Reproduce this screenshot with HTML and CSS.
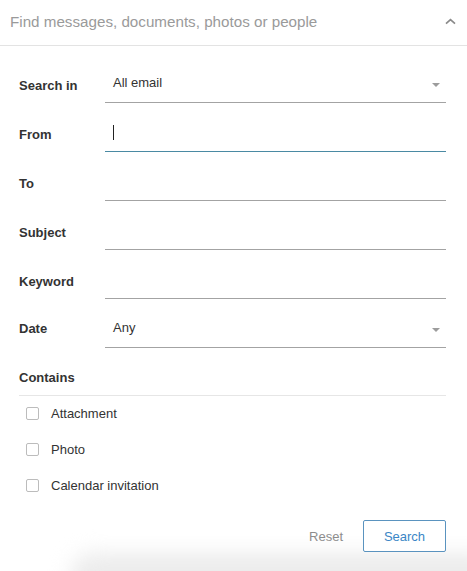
FILE: index.html
```html
<!DOCTYPE html>
<html>
<head>
<meta charset="utf-8">
<link rel="stylesheet" href="styles.css">
</head>
<body>
<div class="panel">
  <div class="shadow"></div>
  <div class="header">
    <span class="placeholder">Find messages, documents, photos or people</span>
    <svg class="chev" width="11" height="7" viewBox="0 0 11 7"><path d="M1 5.6 L5.5 1.6 L10 5.6" fill="none" stroke="#8a8a8a" stroke-width="1.7"/></svg>
  </div>
  <div class="form">
    <div class="row">
      <div class="label">Search in</div>
      <div class="field select"><span class="value">All email</span><span class="caret"></span></div>
    </div>
    <div class="row">
      <div class="label">From</div>
      <div class="field focus"><span class="cursor"></span></div>
    </div>
    <div class="row">
      <div class="label">To</div>
      <div class="field"></div>
    </div>
    <div class="row">
      <div class="label">Subject</div>
      <div class="field"></div>
    </div>
    <div class="row">
      <div class="label">Keyword</div>
      <div class="field"></div>
    </div>
    <div class="row date">
      <div class="label">Date</div>
      <div class="field select"><span class="value">Any</span><span class="caret"></span></div>
    </div>
    <div class="contains">Contains</div>
    <div class="checks">
      <div class="check"><span class="box"></span><span>Attachment</span></div>
      <div class="check"><span class="box"></span><span>Photo</span></div>
      <div class="check"><span class="box"></span><span>Calendar invitation</span></div>
    </div>
    <div class="actions">
      <span class="reset">Reset</span>
      <span class="search">Search</span>
    </div>
  </div>
</div>
</body>
</html>
```

FILE: styles.css
```css
html, body {
  margin: 0;
  padding: 0;
  background: #fff;
}
body {
  font-family: "Liberation Sans", Arial, Helvetica, sans-serif;
  color: #333;
  width: 467px;
  height: 571px;
  overflow: hidden;
}
.panel {
  position: relative;
  height: 571px;
  overflow: hidden;
}
.header {
  position: relative;
  border-bottom: 1px solid #e3e3e3;
  display: flex;
  align-items: center;
  justify-content: space-between;
  padding: 0 11px 3px 10px;
  box-sizing: border-box;
  height: 46px;
}
.placeholder {
  font-size: 15.2px;
  color: #9a9a9a;
}
.chev {
  margin-top: 1px;
}
.form {
  position: relative;
  padding: 8px 21px 0 19px;
}
.row {
  display: flex;
  align-items: flex-end;
  height: 49px;
}
.label {
  width: 86px;
  flex: none;
  font-weight: bold;
  font-size: 13px;
  line-height: 16px;
  padding-bottom: 9px;
}
.row.date .label {
  padding-bottom: 11px;
}
.field {
  flex: 1;
  height: 37px;
  box-sizing: border-box;
  border-bottom: 1px solid #a3a3a3;
  display: flex;
  align-items: flex-end;
  padding: 0 0 11px 8px;
  position: relative;
}
.field.focus {
  border-bottom-color: #4a8aa3;
}
.value {
  font-size: 13px;
  line-height: 16px;
}
.caret {
  position: absolute;
  right: 6px;
  bottom: 15px;
  width: 0;
  height: 0;
  border-left: 4.5px solid transparent;
  border-right: 4.5px solid transparent;
  border-top: 4.5px solid #9c9c9c;
}
.cursor {
  display: block;
  width: 1px;
  height: 15px;
  background: #222;
}
.contains {
  font-weight: bold;
  font-size: 13px;
  line-height: 16px;
  padding-top: 22px;
  padding-bottom: 9px;
  border-bottom: 1px solid #e6e6e6;
}
.checks {
  display: flex;
  flex-direction: column;
  margin-top: -1px;
}
.check {
  display: flex;
  align-items: center;
  height: 36px;
  font-size: 13px;
  padding-left: 7px;
}
.box {
  width: 13px;
  height: 13px;
  box-sizing: border-box;
  border: 1px solid #bcbcbc;
  border-radius: 2px;
  margin-right: 12px;
  background: #fff;
}
.actions {
  display: flex;
  justify-content: flex-end;
  align-items: center;
  margin-top: 17px;
  gap: 20px;
}
.reset {
  font-size: 13px;
  color: #8d8d8d;
}
.search {
  width: 83px;
  height: 32px;
  box-sizing: border-box;
  border: 1px solid #5a93bf;
  border-radius: 2px;
  color: #3a86c6;
  font-size: 13px;
  display: flex;
  align-items: center;
  justify-content: center;
  background: #fff;
}
.shadow {
  position: absolute;
  left: 70px;
  right: -40px;
  bottom: -30px;
  height: 48px;
  border-radius: 30px;
  background: #ececec;
  filter: blur(10px);
}
```
